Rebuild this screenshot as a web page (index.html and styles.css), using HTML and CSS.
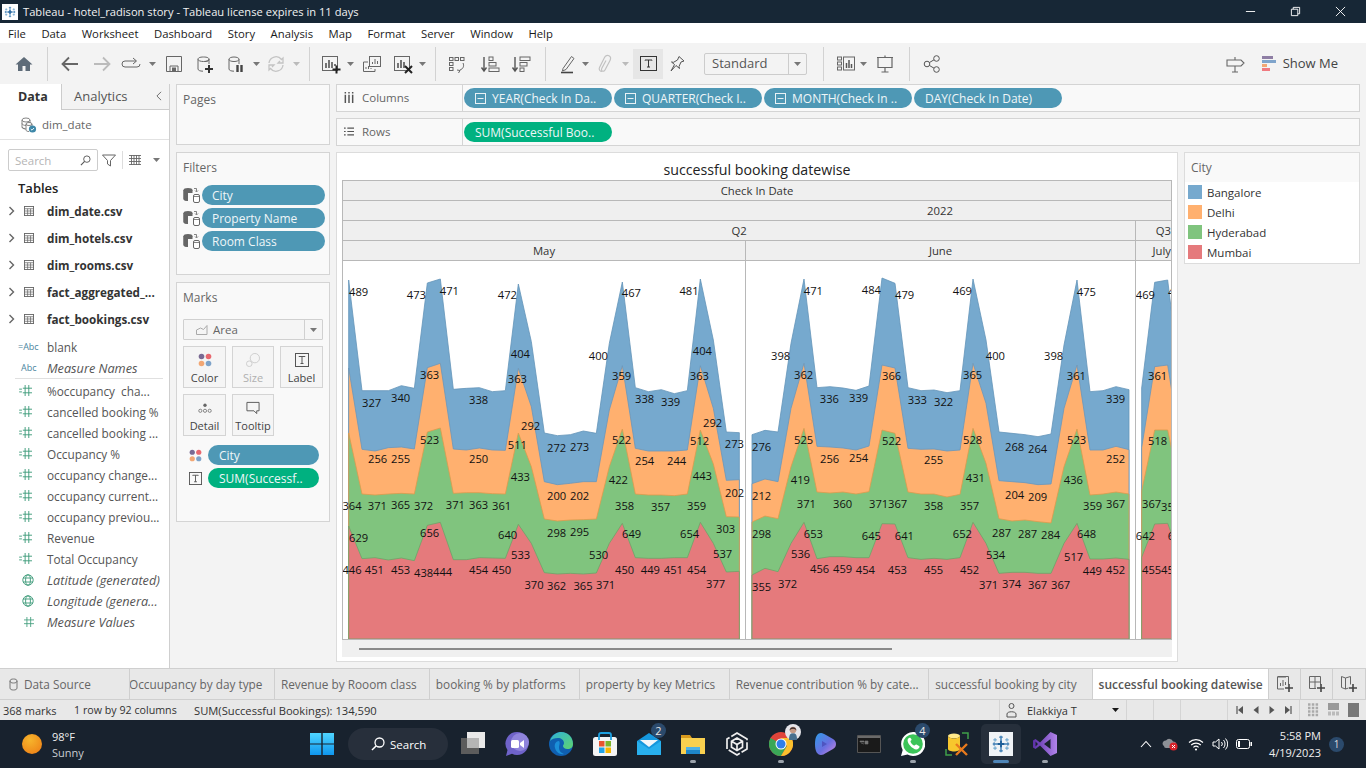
FILE: index.html
```html
<!DOCTYPE html>
<html lang="en">
<head>
<meta charset="utf-8">
<title>Tableau - hotel_radison story</title>
<link rel="stylesheet" href="styles.css">
</head>
<body>
<svg class="defs" width="0" height="0" aria-hidden="true">
  <defs>
    <symbol id="snow" viewBox="0 0 24 24">
      <g stroke="#3f7fb5" stroke-width="1.6" fill="none">
        <path d="M12 3v18M3 12h18"/>
        <path d="M10 4.500h4M10 19.500h4M4.500 10v4M19.500 10v4" stroke-width="1.200"/>
        <path d="M5.500 5.500v4M3.500 7.500h4M18.500 5.500v4M16.500 7.500h4M5.500 14.500v4M3.500 16.500h4M18.500 14.500v4M16.500 16.500h4" stroke-width="1" stroke="#5b9bc8"/>
        <path d="M12 8.500v7M8.500 12h7" stroke="#1f5f99" stroke-width="2"/>
      </g>
    </symbol>
    <symbol id="measure" viewBox="0 0 16 12">
      <path d="M0 4.500h3M0 7.500h3" stroke="#3c9a78" fill="none"/>
      <path d="M6.500 0v12M10.500 0v12M4 3.500h10M4 8.500h10" stroke="#3c9a78" fill="none"/>
    </symbol>
    <symbol id="globe" viewBox="0 0 12 12">
      <g fill="none" stroke="#3c9a78" stroke-width=".9"><circle cx="6" cy="6" r="5.200"/><ellipse cx="6" cy="6" rx="2.400" ry="5.200"/><path d="M1 4h10M1 8h10"/></g>
    </symbol>
    <symbol id="table" viewBox="0 0 11 11">
      <rect x=".5" y=".5" width="10" height="10" fill="none" stroke="#666"/>
      <path d="M.5 3h10M.5 5.500h10M.5 8h10M4 3v7.500M7.200 3v7.500" stroke="#666" stroke-width=".8"/>
    </symbol>
    <symbol id="chev" viewBox="0 0 7 10"><path d="M1.500 1l4 4-4 4" fill="none" stroke="#666" stroke-width="1.400"/></symbol>
    <symbol id="dbfilter" viewBox="0 0 18 16">
      <ellipse cx="5" cy="3" rx="4.500" ry="2" fill="#666"/><path d="M.5 3v9c0 1.100 2 2 4.500 2V3z" fill="#666"/><path d="M9.500 3v3H5v8C2.500 14 .5 13 .5 12V3" fill="#666"/>
      <path d="M11 1.500h2.500v3M12 3.500l1.500 1.500 1.500-1.500" fill="none" stroke="#666" stroke-width=".8"/>
      <rect x="10.500" y="7.500" width="6" height="8" rx="1.500" fill="#fff" stroke="#666"/><path d="M10.500 9.500h6" stroke="#666" stroke-width=".8"/>
    </symbol>
    <symbol id="caret" viewBox="0 0 7 4"><path d="M0 0h7L3.500 4z" fill="#777"/></symbol>
    <symbol id="caretg" viewBox="0 0 7 4"><path d="M0 0h7L3.500 4z" fill="#bbb"/></symbol>
    <symbol id="minus" viewBox="0 0 11 11"><rect x=".5" y=".5" width="10" height="10" fill="none" stroke="#e8f2f6"/><path d="M2.500 5.500h6" stroke="#e8f2f6"/></symbol>
    <symbol id="tbox" viewBox="0 0 14 14"><rect x=".5" y=".5" width="13" height="13" fill="none" stroke="#555"/><path d="M4 4V3.500h6V4M7 3.500v7M5.500 10.500h3" fill="none" stroke="#555"/></symbol>
    <symbol id="fourdots" viewBox="0 0 14 14"><circle cx="3.500" cy="3.500" r="2.800" fill="#7a6a93"/><circle cx="10.500" cy="3.500" r="2.800" fill="#e8686f"/><circle cx="3.500" cy="10.500" r="2.800" fill="#f2a774"/><circle cx="10.500" cy="10.500" r="2.800" fill="#7ea3c9"/></symbol>
  </defs>
</svg>

<header class="titlebar">
  <svg class="appicon" viewBox="0 0 16 16"><rect width="16" height="16" fill="#fff"/><use href="#snow" x="1" y="1" width="14" height="14"/></svg>
  <span class="apptitle">Tableau - hotel_radison story - Tableau license expires in 11 days</span>
  <div class="winctl">
    <svg viewBox="0 0 12 12"><path d="M1 6h10" stroke="#fff"/></svg>
    <svg viewBox="0 0 12 12"><path d="M1.500 3.500h7v7h-7zM3.500 3.500v-2h7v7h-2" fill="none" stroke="#fff"/></svg>
    <svg viewBox="0 0 12 12"><path d="M1 1l10 10M11 1L1 11" stroke="#fff"/></svg>
  </div>
</header>

<nav class="menubar">
  <span>File</span><span>Data</span><span>Worksheet</span><span>Dashboard</span><span>Story</span><span>Analysis</span><span>Map</span><span>Format</span><span>Server</span><span>Window</span><span>Help</span>
</nav>

<div class="toolbar">
  <svg class="ti" viewBox="0 0 20 20"><path d="M10 3L1.500 10.500H4V17h4.500v-5h3v5H16v-6.500h2.500z" fill="#5e6b78"/></svg>
  <i class="sep m13"></i>
  <svg class="ti m12" viewBox="0 0 20 20"><path d="M18 10H3M9 3.500L2.500 10 9 16.500" fill="none" stroke="#666" stroke-width="1.800"/></svg>
  <svg class="ti m12" viewBox="0 0 20 20"><path d="M2 10h15M11 3.500l6.500 6.500-6.500 6.500" fill="none" stroke="#bbb" stroke-width="1.800"/></svg>
  <svg class="ti m9" viewBox="0 0 20 20"><path d="M15 7H4a3 3 0 0 0 0 6h12a3 3 0 0 0 3-3" fill="none" stroke="#666"/><path d="M12 4l3.500 3-3.500 3" fill="none" stroke="#666"/></svg>
  <svg class="tc m8"><use href="#caret"/></svg>
  <svg class="ti m8" viewBox="0 0 20 20"><path d="M2.500 2.500h15v15h-15z" fill="none" stroke="#666"/><path d="M6 17.500V12h8v5.500" fill="none" stroke="#666"/><rect x="8" y="13.500" width="4" height="4" fill="#666"/></svg>
  <svg class="ti m11" viewBox="0 0 20 20"><path d="M10 7.500c2.500 0 4-.9 4-2.200S12.500 3 8.500 3 3 4 3 5.300V15c0 1.300 2 2.200 5 2.200M3 5.300c0 1.300 2.500 2.200 5.500 2.200s5.500-.9 5.500-2.200V10" fill="none" stroke="#666"/><path d="M14 11v8M10 15h8" stroke="#333" stroke-width="2"/></svg>
  <svg class="ti m11" viewBox="0 0 20 20"><path d="M3 5.300C3 4 5 3 8 3s5 1 5 2.300V10M3 5.300C3 6.600 5 7.500 8 7.500s5-.9 5-2.200M3 5.300V15c0 1.300 2 2.200 5 2.200" fill="none" stroke="#666"/><path d="M11.500 11v7M15.500 11v7" stroke="#444" stroke-width="2.400"/></svg>
  <svg class="tc m7"><use href="#caret"/></svg>
  <svg class="ti m6" viewBox="0 0 20 20"><path d="M3 9a7 7 0 0 1 12.500-3.500L17 4v5h-5l2-2M17 11a7 7 0 0 1-12.500 3.500L3 16v-5h5l-2 2" fill="none" stroke="#c4c4c4" stroke-width="1.300"/></svg>
  <svg class="tc m7"><use href="#caretg"/></svg>
  <i class="sep m9"></i>
  <svg class="ti m11" viewBox="0 0 20 20"><rect x="1.500" y="2.500" width="15" height="14" fill="none" stroke="#666"/><path d="M5 14V9M8 14V6M11 14v-6M14 12v-2" stroke="#555" stroke-width="1.600"/><path d="M15.500 11.500v8M11.500 15.500h8" stroke="#222" stroke-width="2"/></svg>
  <svg class="tc m6"><use href="#caret"/></svg>
  <svg class="ti m8" viewBox="0 0 20 20"><rect x="7.500" y="2.500" width="11" height="10" fill="#f3f3f3" stroke="#666"/><path d="M10.500 10V8M13 10V5M15.500 10V7" stroke="#666"/><path d="M6 8H1.500v9.500H13V15" fill="none" stroke="#666"/><path d="M4 15v-2M6.500 15v-3M9 15v-1" stroke="#666"/></svg>
  <svg class="ti m11" viewBox="0 0 20 20"><rect x="1.500" y="2.500" width="15" height="14" fill="none" stroke="#666"/><path d="M5 14V9M8 14V6M11 14v-6" stroke="#555" stroke-width="1.600"/><path d="M12 12l7 7M19 12l-7 7" stroke="#222" stroke-width="2"/></svg>
  <svg class="tc m6"><use href="#caret"/></svg>
  <i class="sep m9"></i>
  <svg class="ti m11" viewBox="0 0 20 20"><g fill="none" stroke="#666"><rect x="2.500" y="3.500" width="3.500" height="3"/><rect x="8" y="3.500" width="3.500" height="3"/><rect x="13.500" y="3.500" width="3.500" height="3"/><rect x="2.500" y="8.500" width="3.500" height="3"/><rect x="2.500" y="13.500" width="3.500" height="3"/><path d="M16 9c1.500 3 0 6-3 7M10 16l3 .5-1.500 2.500"/></g></svg>
  <svg class="ti m13" viewBox="0 0 20 20"><path d="M4 3v13M1.500 13.500L4 17l2.500-3.500" fill="none" stroke="#555" stroke-width="1.400"/><g fill="none" stroke="#666"><rect x="9" y="3" width="4" height="3.500"/><rect x="9" y="8.500" width="7" height="3.500"/><rect x="9" y="14" width="10" height="3.500"/></g></svg>
  <svg class="ti m11" viewBox="0 0 20 20"><path d="M4 3v13M1.500 13.500L4 17l2.500-3.500" fill="none" stroke="#555" stroke-width="1.400"/><g fill="none" stroke="#666"><rect x="9" y="3" width="10" height="3.500"/><rect x="9" y="8.500" width="7" height="3.500"/><rect x="9" y="14" width="4" height="3.500"/></g></svg>
  <i class="sep m14"></i>
  <svg class="ti m12" viewBox="0 0 20 20"><path d="M5 14.500L13.500 2.500l2.500 2L8 15.500 4.500 17z" fill="none" stroke="#666"/><path d="M3 18.500h12" stroke="#444" stroke-width="1.600"/></svg>
  <svg class="tc m4"><use href="#caret"/></svg>
  <svg class="ti m6" viewBox="0 0 20 20"><path d="M7 17.500c-2 0-3.500-2-2.500-4l5-10c1-2 3-2.500 4.500-1.700s2 2.700 1 4.700l-5 9.500c-.7 1.300-2 1.500-2.800 1s-1-1.600-.4-2.800L11 6.500" fill="none" stroke="#c2c2c2" stroke-width="1.200"/></svg>
  <svg class="tc m7"><use href="#caretg"/></svg>
  <div class="tbtn m4"><svg viewBox="0 0 17 15"><rect x=".5" y=".5" width="16" height="14" fill="none" stroke="#333"/><path d="M5 4.500V4h7v.5M8.500 4v7M7 11h3" fill="none" stroke="#333"/></svg></div>
  <svg class="ti m4" viewBox="0 0 20 20"><path d="M12 2.500l5 4.500-3 1-2 4.500 .5 2L9 11.500 4 17l3.500-6.500L4.500 8l2 .3L10.500 6z" fill="none" stroke="#555"/></svg>
  <div class="combo m17"><span>Standard</span><b><svg class="tc"><use href="#caret"/></svg></b></div>
  <i class="sep m16"></i>
  <svg class="ti m12" viewBox="0 0 20 20"><g fill="none" stroke="#666"><rect x="1.500" y="3" width="4" height="3"/><rect x="1.500" y="8" width="4" height="3"/><rect x="1.500" y="13" width="4" height="3"/><rect x="7.500" y="3" width="11" height="13"/></g><path d="M10.500 14V9M13 14V6M15.500 14v-4" stroke="#555" stroke-width="1.500"/></svg>
  <svg class="tc m4"><use href="#caret"/></svg>
  <svg class="ti m8" viewBox="0 0 20 20"><path d="M2 3.500h16M3 3.500v10h14v-10M10 1.500v2M10 13.500v4M6.500 18h7" fill="none" stroke="#666" stroke-width="1.200"/></svg>
  <i class="sep m14"></i>
  <svg class="ti m12" viewBox="0 0 20 20"><g fill="none" stroke="#555"><circle cx="5" cy="10" r="2.800"/><circle cx="14.500" cy="4.500" r="2.800"/><circle cx="14.500" cy="15.500" r="2.800"/><path d="M7.500 8.500l4.500-2.700M7.500 11.500l4.500 2.700"/></g></svg>
  <span class="spacer"></span>
  <svg class="ti" viewBox="0 0 20 20"><path d="M2 6h14l3 3-3 3H2zM10 3v3M10 12v6M7 18h6" fill="none" stroke="#666" stroke-width="1.100"/></svg>
  <div class="showme">
    <span class="smbars"><i class="s1"></i><i class="s2"></i><i class="s3"></i><i class="s4"></i></span>
    <span>Show Me</span>
  </div>
</div>

<main class="main">
  <aside class="datapane">
    <div class="dtabs"><span class="dtab on">Data</span><span class="dtab off">Analytics<svg viewBox="0 0 7 12"><path d="M6 1L1 6l5 5" fill="none" stroke="#555"/></svg></span></div>
    <div class="source">
      <svg viewBox="0 0 17 16"><g fill="none" stroke="#777" stroke-width=".9"><ellipse cx="6" cy="3" rx="4" ry="2"/><path d="M2 3v7c0 1 1.500 2 4 2M10 3v3M2 6.500c0 1 2 2 4 2M2 10c0 1 2 1.500 3 1.500"/><ellipse cx="9" cy="7" rx="3" ry="1.500"/><path d="M6 7v6c0 1 1.500 1.500 3 1.500M12 7v2"/></g><circle cx="12.500" cy="12" r="3.600" fill="#3d87a8"/><path d="M10.800 12l1.200 1.200 2-2.200" fill="none" stroke="#fff" stroke-width=".9"/></svg>
      <span>dim_date</span>
    </div>
    <div class="searchrow">
      <div class="search"><span>Search</span><svg viewBox="0 0 12 12"><circle cx="7.500" cy="4.500" r="3.500" fill="none" stroke="#555"/><path d="M5 7l-4 4" stroke="#555" stroke-width="1.200"/></svg></div>
      <svg class="funnel" viewBox="0 0 14 13"><path d="M.5 1h13L8.500 6.500V12l-3-2V6.500z" fill="none" stroke="#666"/></svg>
      <i class="vsep"></i>
      <svg class="listicon" viewBox="0 0 12 10"><path d="M0 .5h12M0 3.500h12M0 6.500h12M0 9.500h12M2.500 0v10M5 0v10M7.500 0v10M10 0v10" stroke="#666" stroke-width=".9"/></svg>
      <svg class="tc"><use href="#caret"/></svg>
    </div>
    <div class="tablesh">Tables</div>
    <ul class="tables">
      <li><svg class="ch"><use href="#chev"/></svg><svg class="tb"><use href="#table"/></svg><span>dim_date.csv</span></li>
      <li><svg class="ch"><use href="#chev"/></svg><svg class="tb"><use href="#table"/></svg><span>dim_hotels.csv</span></li>
      <li><svg class="ch"><use href="#chev"/></svg><svg class="tb"><use href="#table"/></svg><span>dim_rooms.csv</span></li>
      <li><svg class="ch"><use href="#chev"/></svg><svg class="tb"><use href="#table"/></svg><span>fact_aggregated_...</span></li>
      <li><svg class="ch"><use href="#chev"/></svg><svg class="tb"><use href="#table"/></svg><span>fact_bookings.csv</span></li>
    </ul>
    <ul class="fields">
      <li><em class="abc eq">=Abc</em><span>blank</span></li>
      <li class="last"><em class="abc">Abc</em><span class="it">Measure Names</span></li>
      <li><svg class="mi"><use href="#measure"/></svg><span>%occupancy &nbsp;cha...</span></li>
      <li><svg class="mi"><use href="#measure"/></svg><span>cancelled booking %</span></li>
      <li><svg class="mi"><use href="#measure"/></svg><span>cancelled booking ...</span></li>
      <li><svg class="mi"><use href="#measure"/></svg><span>Occupancy %</span></li>
      <li><svg class="mi"><use href="#measure"/></svg><span>occupancy change...</span></li>
      <li><svg class="mi"><use href="#measure"/></svg><span>occupancy current...</span></li>
      <li><svg class="mi"><use href="#measure"/></svg><span>occupancy previou...</span></li>
      <li><svg class="mi"><use href="#measure"/></svg><span>Revenue</span></li>
      <li><svg class="mi"><use href="#measure"/></svg><span>Total Occupancy</span></li>
      <li><svg class="gi"><use href="#globe"/></svg><span class="it">Latitude (generated)</span></li>
      <li><svg class="gi"><use href="#globe"/></svg><span class="it">Longitude (genera...</span></li>
      <li><svg class="hi" viewBox="0 0 12 12"><path d="M3.500 0v12M8 0v12M0 3.500h12M0 8h12" stroke="#3c9a78" fill="none"/></svg><span class="it">Measure Values</span></li>
    </ul>
  </aside>

  <section class="cards">
    <div class="card pages"><h3>Pages</h3></div>
    <div class="card filters">
      <h3>Filters</h3>
      <div class="frow"><svg><use href="#dbfilter"/></svg><span class="pill blue">City</span></div>
      <div class="frow"><svg><use href="#dbfilter"/></svg><span class="pill blue">Property Name</span></div>
      <div class="frow"><svg><use href="#dbfilter"/></svg><span class="pill blue">Room Class</span></div>
    </div>
    <div class="card marks">
      <h3>Marks</h3>
      <div class="markcombo">
        <svg viewBox="0 0 12 10"><path d="M.5 9.500V5l4-2 3 1.500L11 .5v9z" fill="none" stroke="#aaa"/></svg>
        <span>Area</span><b><svg class="tc"><use href="#caret"/></svg></b>
      </div>
      <div class="markbtns">
        <div class="mb"><svg class="mbi"><use href="#fourdots"/></svg><span>Color</span></div>
        <div class="mb dim"><svg class="mbi" viewBox="0 0 15 15"><circle cx="9.500" cy="5.500" r="5" fill="none" stroke="#ccc"/><circle cx="3.500" cy="11.500" r="3" fill="none" stroke="#ccc"/></svg><span>Size</span></div>
        <div class="mb"><svg class="mbi"><use href="#tbox"/></svg><span>Label</span></div>
        <div class="mb"><svg class="mbi" viewBox="0 0 15 14"><circle cx="7.500" cy="4" r="1.800" fill="#666"/><g fill="none" stroke="#666" stroke-width=".8"><circle cx="2.500" cy="10" r="1.700"/><circle cx="7.500" cy="10" r="1.700"/><circle cx="12.500" cy="10" r="1.700"/></g></svg><span>Detail</span></div>
        <div class="mb"><svg class="mbi" viewBox="0 0 15 14"><path d="M1 1h13v9h-2.500v3l-3-3H1z" fill="none" stroke="#555"/></svg><span>Tooltip</span></div>
      </div>
      <div class="mrow"><svg><use href="#fourdots"/></svg><span class="pill blue">City</span></div>
      <div class="mrow"><svg><use href="#tbox"/></svg><span class="pill green">SUM(Successf..</span></div>
    </div>
  </section>

  <section class="work">
    <div class="shelf">
      <div class="shlabel"><svg viewBox="0 0 10 12"><path d="M1 3v9M5 3v9M9 3v9M1 0v1.500M5 0v1.500M9 0v1.500" stroke="#555" stroke-width="1.600"/></svg>Columns</div>
      <div class="shpills">
        <span class="pill blue cp"><svg><use href="#minus"/></svg>YEAR(Check In Da..</span>
        <span class="pill blue cp"><svg><use href="#minus"/></svg>QUARTER(Check I..</span>
        <span class="pill blue cp"><svg><use href="#minus"/></svg>MONTH(Check In ..</span>
        <span class="pill blue cp">DAY(Check In Date)</span>
      </div>
    </div>
    <div class="shelf">
      <div class="shlabel"><svg viewBox="0 0 12 10"><path d="M0 1h2M4 1h8M0 5h2M4 5h8M0 9h2M4 9h8" stroke="#555" stroke-width="1.400"/></svg>Rows</div>
      <div class="shpills"><span class="pill green cp">SUM(Successful Boo..</span></div>
    </div>
    <div class="vizrow">
      <div class="viz">
        <div class="viztitle">successful booking datewise</div>
        <div class="xtab">
          <div class="hrow"><div class="hc">Check In Date</div></div>
          <div class="hrow"><div class="hc yr">2022</div></div>
          <div class="hrow"><div class="hc q2">Q2</div><div class="hc q3">Q3</div></div>
          <div class="hrow"><div class="hc mmay">May</div><div class="hc mjun">June</div><div class="hc mjul">July</div></div>
          <div class="panes">
            <svg class="pane pmay" viewBox="21 3 1206 1134">
              <g class="areas">
                <polygon class="a-b" points="38,1137 38,60 78,392 117,392 157,392 196,377 235,385 274,69 313,57 352,388 391,385 430,383 469,395 508,392 547,72 586,245 625,519 664,527 703,524 742,513 781,520 820,250 859,66 898,383 937,395 976,389 1015,401 1054,392 1093,57 1132,240 1171,516 1210,518 1210,1137"/>
                <polygon class="a-o" points="38,1137 38,324 78,568 117,573 157,563 196,561 235,567 274,323 313,310 352,567 391,570 430,564 469,570 508,571 547,325 586,440 625,665 664,674 703,670 742,665 781,665 820,450 859,317 898,565 937,573 976,573 1015,573 1054,570 1093,317 1132,445 1171,661 1210,659 1210,1137"/>
                <polygon class="a-g" points="38,1137 38,519 78,702 117,705 157,702 196,700 235,702 274,516 313,504 352,700 391,698 430,698 469,701 508,702 547,519 586,620 625,777 664,783 703,780 742,779 781,777 820,620 859,507 898,702 937,705 976,705 1015,707 1054,702 1093,510 1132,612 1171,770 1210,771 1210,1137"/>
                <polygon class="a-r" points="38,1137 38,798 78,896 117,893 157,900 196,894 235,902 274,796 313,787 352,899 391,899 430,893 469,894 508,895 547,793 586,850 625,938 664,942 703,940 742,942 781,939 820,850 859,790 898,893 937,895 976,895 1015,893 1054,893 1093,787 1132,850 1171,936 1210,934 1210,1137"/>
              </g>
              <g class="lbl">
                <text x="68" y="107">489</text><text x="241" y="116">473</text><text x="340" y="104">471</text><text x="514" y="118">472</text><text x="553" y="293">404</text><text x="787" y="299">400</text><text x="886" y="112">467</text><text x="1059" y="104">481</text><text x="1099" y="284">404</text>
                <text x="107" y="440">327</text><text x="194" y="425">340</text><text x="281" y="356">363</text><text x="428" y="431">338</text><text x="544" y="370">363</text><text x="857" y="361">359</text><text x="926" y="430">338</text><text x="1004" y="437">339</text><text x="1090" y="361">363</text>
                <text x="584" y="509">292</text><text x="1130" y="500">292</text><text x="662" y="575">272</text><text x="731" y="572">273</text><text x="1195" y="563">273</text>
                <text x="125" y="610">256</text><text x="194" y="608">255</text><text x="281" y="551">523</text><text x="428" y="610">250</text><text x="544" y="566">511</text><text x="857" y="553">522</text><text x="926" y="614">254</text><text x="1022" y="616">244</text><text x="1091" y="556">512</text>
                <text x="553" y="664">433</text><text x="847" y="673">422</text><text x="1099" y="659">443</text><text x="662" y="721">200</text><text x="731" y="719">202</text><text x="1196" y="710">202</text>
                <text x="48" y="749">364</text><text x="124" y="749">371</text><text x="194" y="746">365</text><text x="263" y="749">372</text><text x="358" y="746">371</text><text x="428" y="746">363</text><text x="497" y="749">361</text><text x="866" y="749">358</text><text x="974" y="752">357</text><text x="1082" y="749">359</text>
                <text x="662" y="830">298</text><text x="731" y="827">295</text><text x="1169" y="818">303</text><text x="68" y="845">629</text><text x="281" y="832">656</text><text x="515" y="838">640</text><text x="887" y="835">649</text><text x="1061" y="833">654</text>
                <text x="554" y="898">533</text><text x="788" y="898">530</text><text x="1160" y="895">537</text>
                <text x="48" y="943">446</text><text x="115" y="941">451</text><text x="194" y="941">453</text><text x="263" y="950">438</text><text x="320" y="947">444</text><text x="428" y="941">454</text><text x="497" y="941">450</text><text x="866" y="941">450</text><text x="943" y="943">449</text><text x="1012" y="941">451</text><text x="1082" y="941">454</text>
                <text x="594" y="986">370</text><text x="662" y="989">362</text><text x="741" y="989">365</text><text x="809" y="986">371</text><text x="1139" y="983">377</text>
              </g>
            </svg>
            <svg class="pane pjun" viewBox="3 3 1167 1134">
              <g class="areas">
                <polygon class="a-b" points="21,1137 21,524 60,511 99,516 138,250 177,57 216,383 255,380 294,384 333,391 372,378 411,54 450,70 489,383 528,392 567,390 606,398 645,392 684,57 723,240 762,516 801,520 840,524 879,530 918,522 957,255 996,60 1035,395 1074,392 1113,380 1152,389 1152,1137"/>
                <polygon class="a-o" points="21,1137 21,671 60,657 99,665 138,445 177,310 216,559 255,561 294,564 333,570 372,558 411,315 450,324 489,565 528,568 567,567 606,573 645,570 684,310 723,430 762,662 801,665 840,668 879,674 918,672 957,445 996,315 1035,570 1074,570 1113,559 1152,569 1152,1137"/>
                <polygon class="a-g" points="21,1137 21,786 60,768 99,776 138,620 177,505 216,696 255,699 294,696 333,702 372,695 411,510 450,520 489,696 528,702 567,702 606,711 645,703 684,505 723,610 762,776 801,783 840,780 879,785 918,789 957,620 996,507 1035,705 1074,702 1113,696 1152,702 1152,1137"/>
                <polygon class="a-r" points="21,1137 21,945 60,925 99,935 138,850 177,787 216,896 255,890 294,890 333,893 372,893 411,791 450,792 489,893 528,898 567,895 606,898 645,893 684,787 723,850 762,940 801,937 840,937 879,940 918,940 957,850 996,790 1035,897 1074,897 1113,894 1152,898 1152,1137"/>
              </g>
              <g class="lbl">
                <text x="205" y="104">471</text><text x="379" y="101">484</text><text x="479" y="116">479</text><text x="652" y="104">469</text><text x="1024" y="107">475</text><text x="107" y="299">398</text><text x="751" y="299">400</text><text x="926" y="299">398</text>
                <text x="176" y="356">362</text><text x="440" y="361">366</text><text x="683" y="356">365</text><text x="994" y="361">361</text><text x="253" y="428">336</text><text x="341" y="425">339</text><text x="517" y="431">333</text><text x="596" y="437">322</text><text x="1112" y="428">339</text>
                <text x="50" y="572">276</text><text x="809" y="572">268</text><text x="878" y="578">264</text><text x="176" y="551">525</text><text x="440" y="556">522</text><text x="683" y="551">528</text><text x="995" y="553">523</text>
                <text x="254" y="608">256</text><text x="341" y="605">254</text><text x="566" y="611">255</text><text x="1112" y="608">252</text><text x="166" y="671">419</text><text x="691" y="665">431</text><text x="985" y="671">436</text>
                <text x="50" y="719">212</text><text x="809" y="716">204</text><text x="878" y="722">209</text><text x="184" y="743">371</text><text x="293" y="743">360</text><text x="401" y="743">371</text><text x="458" y="743">367</text><text x="566" y="749">358</text><text x="674" y="749">357</text><text x="1043" y="749">359</text><text x="1112" y="743">367</text>
                <text x="50" y="833">298</text><text x="205" y="833">653</text><text x="379" y="839">645</text><text x="478" y="839">641</text><text x="652" y="833">652</text><text x="770" y="830">287</text><text x="848" y="833">287</text><text x="917" y="836">284</text><text x="1025" y="835">648</text>
                <text x="167" y="895">536</text><text x="752" y="896">534</text><text x="986" y="904">517</text>
                <text x="224" y="938">456</text><text x="293" y="938">459</text><text x="361" y="941">454</text><text x="457" y="941">453</text><text x="566" y="941">455</text><text x="674" y="941">452</text><text x="1042" y="944">449</text><text x="1112" y="941">452</text>
                <text x="50" y="992">355</text><text x="128" y="983">372</text><text x="731" y="986">371</text><text x="800" y="983">374</text><text x="878" y="986">367</text><text x="947" y="986">367</text>
              </g>
            </svg>
            <svg class="pane pjul" viewBox="1173 3 105 1134">
              <g class="areas">
                <polygon class="a-b" points="1190,1137 1190,384 1229,67 1268,60 1307,380 1307,1137"/>
                <polygon class="a-o" points="1190,1137 1190,563 1229,320 1268,315 1307,560 1307,1137"/>
                <polygon class="a-g" points="1190,1137 1190,693 1229,510 1268,510 1307,700 1307,1137"/>
                <polygon class="a-r" points="1190,1137 1190,892 1229,792 1268,790 1307,895 1307,1137"/>
              </g>
              <g class="lbl">
                <text x="1201" y="116">469</text><text x="1298" y="107">471</text><text x="1238" y="361">361</text><text x="1238" y="556">518</text><text x="1220" y="743">367</text><text x="1277" y="752">358</text><text x="1201" y="839">642</text><text x="1297" y="839">645</text><text x="1220" y="941">455</text><text x="1277" y="941">454</text>
              </g>
            </svg>
          </div>
        </div>
        <div class="hscroll"><span></span></div>
      </div>
      <div class="legend">
        <div class="lgtitle">City</div>
        <div class="lgitem"><i class="sw-b"></i>Bangalore</div>
        <div class="lgitem"><i class="sw-o"></i>Delhi</div>
        <div class="lgitem"><i class="sw-g"></i>Hyderabad</div>
        <div class="lgitem"><i class="sw-r"></i>Mumbai</div>
      </div>
    </div>
  </section>
</main>

<div class="tabs">
  <div class="tab t0"><svg viewBox="0 0 9 13"><path d="M1 3v7c0 1.500 1.500 2 3.500 2S8 11.500 8 10V3C8 1.500 6.500 1 4.500 1S1 1.500 1 3zM1 3c0 1.500 1.500 2 3.500 2S8 4.500 8 3" fill="none" stroke="#777"/></svg>Data Source</div>
  <div class="tab t1"><span>Occuupancy by day type</span></div>
  <div class="tab t2">Revenue by Rooom class</div>
  <div class="tab t3">booking % by platforms</div>
  <div class="tab t4">property by key Metrics</div>
  <div class="tab t5">Revenue contribution % by cate...</div>
  <div class="tab t6">successful booking by city</div>
  <div class="tab t7 active">successful booking datewise</div>
  <div class="tab tn"><svg viewBox="0 0 18 18"><path d="M10 2H1.500v12H8M1.500 1.500h11v8" fill="none" stroke="#666"/><path d="M4.500 11V8M7 11V5M9.500 10V7" stroke="#666"/><path d="M13 9v8M9 13h8" stroke="#444" stroke-width="1.600"/></svg></div>
  <div class="tab tn"><svg viewBox="0 0 18 18"><path d="M1.500 1.500h11v8M1.500 1.500v12H8M1.500 7h11M7 1.500v12" fill="none" stroke="#666"/><path d="M13 9v8M9 13h8" stroke="#444" stroke-width="1.600"/></svg></div>
  <div class="tab tn"><svg viewBox="0 0 18 18"><path d="M1.500 1.500l4 1.500 5-1.500v8M1.500 1.500v11l4 1.500 3-1M5.500 3v11" fill="none" stroke="#666"/><path d="M13 9v8M9 13h8" stroke="#444" stroke-width="1.600"/></svg></div>
</div>

<footer class="status">
  <span class="st1">368 marks</span><span class="st2">1 row by 92 columns</span><span class="st3">SUM(Successful Bookings): 134,590</span>
  <span class="spacer"></span>
  <div class="user"><svg viewBox="0 0 11 16"><circle cx="5.500" cy="4" r="2.500" fill="none" stroke="#555"/><path d="M1 15v-3c0-3 9-3 9 0v3z" fill="none" stroke="#555"/></svg><span>Elakkiya T</span><svg class="tc dark"><use href="#caret"/></svg></div>
  <i class="cellb"></i><i class="cellb"></i><i class="cellb wide"></i>
  <div class="nav">
    <svg viewBox="0 0 8 8"><path d="M1 0v8" stroke="#555" stroke-width="1.200"/><path d="M7 0v8L2 4z" fill="#555"/></svg>
    <svg viewBox="0 0 8 8"><path d="M6.500 0v8L1.500 4z" fill="#555"/></svg>
    <svg viewBox="0 0 8 8"><path d="M1.500 0v8l5-4z" fill="#555"/></svg>
    <svg viewBox="0 0 8 8"><path d="M7 0v8" stroke="#555" stroke-width="1.200"/><path d="M1 0v8l5-4z" fill="#555"/></svg>
  </div>
  <div class="views">
    <svg viewBox="0 0 11 14"><path d="M0 1.500h11M0 5h11M0 8.500h11M0 12h11" stroke="#aaa" stroke-width="2.500" stroke-dasharray="2.500 1.300"/></svg>
    <svg viewBox="0 0 11 14"><rect width="11" height="7" fill="#999"/><path d="M0 10.500h11" stroke="#bbb" stroke-width="4" stroke-dasharray="3 1"/></svg>
    <svg viewBox="0 0 11 14"><rect width="11" height="14" fill="#777"/></svg>
  </div>
</footer>

<div class="taskbar">
  <div class="weather">
    <i class="sun"></i>
    <div class="wtext"><span>98°F</span><span class="sub">Sunny</span></div>
  </div>
  <div class="taskcenter">
    <div class="tk"><svg viewBox="0 0 24 22"><defs><linearGradient id="wg" x1="0" y1="0" x2="0" y2="1"><stop offset="0" stop-color="#4fd5ff"/><stop offset="1" stop-color="#0f96ee"/></linearGradient></defs><path d="M0 0h11.300v10.500H0zM12.700 0H24v10.500H12.700zM0 11.500h11.300V22H0zM12.700 11.500H24V22H12.700z" fill="url(#wg)"/></svg></div>
    <div class="tsearch"><svg viewBox="0 0 14 14"><circle cx="8.500" cy="5.500" r="4.500" fill="none" stroke="#fff" stroke-width="1.300"/><path d="M5.300 8.700L1 13" stroke="#fff" stroke-width="1.500"/></svg>Search</div>
    <div class="tk"><svg viewBox="0 0 24 24"><rect x="6" y="0" width="18" height="16" fill="#e9e9e9"/><rect y="6" width="18" height="16" fill="#5c5c5c"/><rect x="6" y="6" width="12" height="10" fill="#b5b5b5"/></svg></div>
    <div class="tk"><svg viewBox="0 0 24 24"><path d="M12 0a11.500 11.500 0 1 1-5 21.800L1 24l1.500-6A11.500 11.500 0 0 1 12 0z" fill="#6f63c9"/><circle cx="15" cy="10" r="9" fill="#8f84dc"/><rect x="6" y="8" width="8" height="8" rx="1.500" fill="#fff"/><path d="M15 11l4-3v8l-4-3z" fill="#fff"/></svg></div>
    <div class="tk"><svg viewBox="0 0 24 24"><defs><linearGradient id="eg" x1="0" y1="0" x2="1" y2="1"><stop offset="0" stop-color="#2fb2d8"/><stop offset="1" stop-color="#5fd36f"/></linearGradient></defs><circle cx="12" cy="12" r="12" fill="#0f5fb0"/><path d="M1 9C3 2 9 0 12 0c7 0 12 5 12 12 0 3-2 5-5.500 5-3 0-4.500-1.500-4.500-3 0-1 1-1.500 1-3 0-3-3-5-6-5-3.500 0-6.500 1-8 3z" fill="url(#eg)"/><path d="M10 9c-3 0-5 3-4 7s5 7 9 6c-3-1-5-3-5-6 0-3 1.500-5 0-7z" fill="#1b8fd8"/></svg></div>
    <div class="tk"><svg viewBox="0 0 24 24"><rect y="5" width="24" height="19" rx="2.500" fill="#f4f4f4"/><path d="M6 8V3c0-2 1-2 2-2h8c1 0 2 0 2 2v5" fill="none" stroke="#1da0e0" stroke-width="1.800"/><rect x="6" y="9" width="5.500" height="5.500" fill="#e8542f"/><rect x="12.500" y="9" width="5.500" height="5.500" fill="#7db52c"/><rect x="6" y="15.500" width="5.500" height="5.500" fill="#20a3e8"/><rect x="12.500" y="15.500" width="5.500" height="5.500" fill="#f7b500"/></svg></div>
    <div class="tk"><svg viewBox="0 0 24 24"><path d="M0 9L12 1l12 8v14H0z" fill="#1597dd"/><path d="M3 8h18l-9 7z" fill="#f1f6fa"/><path d="M0 9l12 8 12-8v14H0z" fill="#28b0ee"/></svg><b class="badge">2</b></div>
    <div class="tk"><svg viewBox="0 0 24 24"><path d="M0 3h9l2 3h13v16H0z" fill="#d89a1d"/><rect y="6" width="24" height="16" fill="#f9d04f"/><path d="M5 15h14v7H5z" fill="#1e86c9"/><rect x="5" y="15" width="14" height="3" fill="#4fb2e6"/></svg><i class="dot"></i></div>
    <div class="tk"><svg viewBox="0 0 24 24"><g fill="none" stroke="#eee" stroke-width="1.700"><path d="M12 1l10 6v10l-10 6L2 17V7z" stroke-dasharray="13 2"/><path d="M12 6l5.500 3.200v6L12 18.500l-5.500-3.300v-6zM6.500 9.200L12 12.500l5.500-3.300M12 12.500v6"/></g></svg></div>
    <div class="tk"><svg viewBox="0 0 24 24"><circle cx="12" cy="12" r="12" fill="#e0443a"/><path d="M12 12L1.600 6A12 12 0 0 0 12 24l6-10z" fill="#3aa757"/><path d="M12 24a12 12 0 0 0 10.400-18H12l6 8z" fill="#fbc02d"/><circle cx="12" cy="12" r="5.500" fill="#fff"/><circle cx="12" cy="12" r="4.500" fill="#2f7fe8"/></svg><b class="avatar"><svg viewBox="0 0 12 12"><circle cx="6" cy="6" r="6" fill="#e5e5ea"/><path d="M3 12c0-4 1-5 3-5s3 1 3 5z" fill="#48708f"/><circle cx="6" cy="4.500" r="2.400" fill="#c59a85"/><path d="M3.500 5C3 1.500 9 1.500 8.500 5 8 3 4 3 3.500 5z" fill="#3b2c2c"/></svg></b><i class="dot"></i></div>
    <div class="tk"><svg viewBox="0 0 24 24"><defs><linearGradient id="cg" x1="0" y1="0" x2="1" y2="1"><stop offset="0" stop-color="#2f9be8"/><stop offset=".55" stop-color="#6a6fe0"/><stop offset="1" stop-color="#d08ae0"/></linearGradient></defs><path d="M8 1C4 1 2 5 2 12s2 11 6 11c2 0 3-1 5-2l7-4c2-1 3-3 3-5s-1-4-3-5l-7-4C11 2 10 1 8 1z" fill="url(#cg)"/><path d="M9 9l5 3-5 3z" fill="#4f55c0"/></svg></div>
    <div class="tk"><svg viewBox="0 0 24 18"><rect width="24" height="18" rx="1" fill="#555"/><rect x="1" y="1" width="22" height="16" fill="#1a1a1a"/><rect x="1" y="1" width="22" height="2" fill="#6a6a6a"/><path d="M3 6h4v1H3zM8 6h3v3H8zM4 8l3 1" stroke="#777" stroke-width=".6" fill="#777"/></svg></div>
    <div class="tk"><svg viewBox="0 0 24 24"><path d="M12 0a12 12 0 1 1-5.500 22.500L0 24l1.700-6A12 12 0 0 1 12 0z" fill="#fff"/><circle cx="12" cy="12" r="9.800" fill="#3bc458"/><path d="M8 6c-2 1-2 4 1 7.500s6.500 5 8.500 3c1-1 1.500-2 .5-2.500l-2.500-1.500c-1-.5-1.500 1-2.500 1s-3.500-3-3.500-4c0-1 1.300-1 1-2.200L9.500 6C9.300 5.500 8.500 5.700 8 6z" fill="#fff"/></svg><b class="badge">4</b><i class="dot"></i></div>
    <div class="tk"><svg viewBox="0 0 24 24"><path d="M1 17v6h6M17 1h6v6" fill="none" stroke="#3fa04a" stroke-width="1.500"/><ellipse cx="9" cy="4" rx="6" ry="2.600" fill="#ffe98a"/><path d="M3 4v13c0 1.500 3 2.500 6 2.500s6-1 6-2.500V4c0 1.500-3 2.500-6 2.500S3 5.500 3 4z" fill="#f7c72d"/><path d="M11 12l11 11M22 12L11 23" stroke="#e87a1d" stroke-width="2.400"/></svg></div>
    <div class="tk cur"><svg viewBox="0 0 24 24"><rect width="24" height="24" fill="#f0f3f6"/><use href="#snow" x="1" y="1" width="22" height="22"/></svg><i class="cbar"></i></div>
    <div class="tk"><svg viewBox="0 0 24 24"><defs><linearGradient id="vg" x1="0" y1="0" x2="1" y2="0"><stop offset="0" stop-color="#5b2fa8"/><stop offset="1" stop-color="#b184ea"/></linearGradient></defs><path d="M17.500 0L24 3v18l-6.500 3L7 13.500 2.500 17 0 15.500v-7L2.500 7 7 10.500zM17.500 7L11 12l6.500 5zM2.500 9.500v5L5 12z" fill="url(#vg)"/></svg><i class="dot"></i></div>
  </div>
  <span class="spacer"></span>
  <div class="tray">
    <svg class="t-up" viewBox="0 0 12 8"><path d="M1 7l5-5.500L11 7" fill="none" stroke="#fff" stroke-width="1.100"/></svg>
    <svg class="t-cloud" viewBox="0 0 16 14"><path d="M2 9a3 3 0 0 1 2-5.500 4 4 0 0 1 7 1A3 3 0 0 1 11 11H4A2 2 0 0 1 2 9z" fill="#8c9096"/><circle cx="11.500" cy="9.500" r="4" fill="#d8232a"/><path d="M10 8l3 3M13 8l-3 3" stroke="#fff"/></svg>
    <svg class="t-wifi" viewBox="0 0 16 13"><g fill="none" stroke="#fff" stroke-width="1.100"><path d="M1 4.500a10 10 0 0 1 14 0M3.200 7a7 7 0 0 1 9.600 0M5.400 9.300a4 4 0 0 1 5.200 0"/></g><circle cx="8" cy="11.500" r="1.100" fill="#fff"/></svg>
    <svg class="t-vol" viewBox="0 0 16 14"><path d="M1 5v4h2.500L7 12V2L3.500 5z" fill="none" stroke="#fff"/><path d="M9.500 5a3 3 0 0 1 0 4M11.500 3a6 6 0 0 1 0 8M13.500 1.500a8 8 0 0 1 0 11" fill="none" stroke="#fff"/></svg>
    <svg class="t-bat" viewBox="0 0 16 10"><rect x=".5" y=".5" width="13" height="9" rx="2" fill="none" stroke="#fff"/><rect x="2" y="2" width="2" height="6" fill="#fff"/><rect x="14.500" y="3" width="1.500" height="4" fill="#fff"/></svg>
    <div class="clock"><span>5:58 PM</span><span>4/19/2023</span></div>
    <b class="notif">1</b>
  </div>
</div>
</body>
</html>
```

FILE: styles.css
```css
* { box-sizing: border-box; }
html, body { margin: 0; padding: 0; }
body {
  width: 1366px; height: 768px; overflow: hidden;
  font-family: "Open Sans", "Noto Sans", "Liberation Sans", sans-serif;
  font-size: 11.5px; color: #333; background: #f3f3f3;
  display: flex; flex-direction: column;
}
.defs { position: absolute; }
h3 { margin: 0; font-weight: 400; font-size: 12px; color: #666; }
ul { list-style: none; margin: 0; padding: 0; }
svg { display: block; flex: none; }
.spacer { flex: 1; }

/* title bar */
.titlebar { height: 23px; background: #172736; display: flex; align-items: center; color: #fff; flex: none; }
.appicon { width: 16px; height: 16px; margin-left: 2px; }
.apptitle { margin-left: 5px; font-size: 11.170px; color: #f2f2f2; }
.winctl { margin-left: auto; display: flex; }
.winctl svg { width: 11px; height: 11px; margin-left: 34px; }
.winctl svg:last-child { margin-right: 20px; }
.winctl svg:first-child { margin-left: 0; }

/* menu */
.menubar { height: 20px; background: #fff; display: flex; align-items: center; padding-left: 8px; gap: 15.500px; font-size: 11.300px; color: #1a1a1a; flex: none; }

/* toolbar */
.toolbar { height: 41px; background: #f3f3f3; display: flex; align-items: center; padding-left: 14px; padding-right: 28px; flex: none; }
.ti { width: 20px; height: 20px; }
.tc { width: 7px; height: 4px; }
.sep { width: 1px; height: 34px; background: #d2d2d2; display: block; }
.m4 { margin-left: 4px; } .m6 { margin-left: 6px; } .m7 { margin-left: 7px; } .m8 { margin-left: 8px; }
.m9 { margin-left: 9px; } .m11 { margin-left: 11px; } .m12 { margin-left: 12px; } .m13 { margin-left: 13px; }
.m14 { margin-left: 14px; } .m16 { margin-left: 16px; } .m17 { margin-left: 17px; }
.tbtn { width: 30px; height: 30px; background: #e6e6e6; display: flex; align-items: center; justify-content: center; }
.tbtn svg { width: 17px; height: 15px; }
.combo { width: 103px; height: 22px; border: 1px solid #ccc; border-radius: 2px; display: flex; align-items: center; font-size: 13px; color: #555; padding-left: 7px; }
.combo span { flex: 1; padding-bottom: 2px; }
.combo b { width: 18px; height: 20px; border-left: 1px solid #ccc; display: flex; align-items: center; justify-content: center; }
.showme { display: flex; align-items: center; margin-left: 17px; font-size: 13px; color: #444; gap: 7px; }
.showme > span:last-child { padding-bottom: 2px; }
.smbars { width: 14px; display: flex; flex-direction: column; gap: 1px; }
.smbars i { height: 3px; display: block; }
.s1 { width: 11px; background: #8e7ea4; }
.s2 { width: 14px; background: #7fa4cb; }
.s3 { width: 5px; background: #f2a774; }
.s4 { width: 8px; background: #f07a80; }

/* main */
.main { height: 584px; display: flex; flex: none; }
.datapane { width: 170px; background: #fff; border-right: 1px solid #cfcfcf; flex: none; }
.dtabs { height: 26px; display: flex; }
.dtab { display: flex; align-items: center; font-size: 13px; padding-bottom: 1px; }
.dtab.on { width: 61px; font-weight: 700; padding-left: 18px; color: #333; background: #fff; font-size: 12.500px; }
.dtab.off { flex: 1; background: #f3f3f3; border-left: 1px solid #ccc; border-bottom: 1px solid #ccc; padding-left: 12px; color: #555; justify-content: space-between; padding-right: 7px; }
.dtab.off svg { width: 6px; height: 10px; }
.source { height: 30px; display: flex; align-items: center; padding-left: 20px; border-bottom: 1px solid #e2e2e2; gap: 5px; color: #666; }
.source svg { width: 17px; height: 16px; }
.searchrow { height: 40px; display: flex; align-items: center; padding: 0 0 0 8px; }
.search { width: 90px; height: 22px; border: 1px solid #ccc; border-radius: 2px; display: flex; align-items: center; padding: 0 6px; justify-content: space-between; color: #b5b5b5; font-size: 11.5px; }
.search svg { width: 11px; height: 11px; }
.funnel { width: 14px; height: 13px; margin-left: 4px; }
.vsep { width: 1px; height: 18px; background: #ddd; margin-left: 6px; display: block; }
.listicon { width: 12px; height: 10px; margin-left: 6px; }
.searchrow .tc { margin-left: 12px; }
.tablesh { height: 17px; line-height: 16px; padding-left: 18px; font-weight: 600; font-size: 13px; color: #222; }
.tables li { height: 27px; display: flex; align-items: center; font-weight: 700; color: #333; font-size: 11.700px; white-space: nowrap; }
.tables .ch { width: 7px; height: 10px; margin-left: 8px; }
.tables .tb { width: 10px; height: 10px; margin-left: 9px; }
.tables span { margin-left: 13px; }
.fields { margin-top: 4px; }
.fields li { height: 21px; display: flex; align-items: center; color: #555; font-size: 11.800px; position: relative; white-space: nowrap; }
.fields li > span { position: absolute; left: 47px; }
.fields .it { font-style: italic; font-size: 12.700px; }
.fields li.last { border-bottom: 0; }
.fields li.last::after { content: ""; position: absolute; left: 15px; right: 6px; bottom: -1px; height: 1px; background: #e0e0e0; }
.fields li.last + li { margin-top: 2px; }
.abc { font-style: normal; font-size: 9px; color: #4b86a0; margin-left: 21px; }
.abc.eq { margin-left: 18px; }
.mi { width: 15px; height: 11px; margin-left: 19px; }
.gi { width: 12px; height: 12px; margin-left: 22px; }
.hi { width: 10px; height: 10px; margin-left: 24px; }

.cards { width: 154px; margin-left: 6px; flex: none; display: flex; flex-direction: column; gap: 7px; }
.card { border: 1px solid #d4d4d4; background: #f9f9f9; padding: 6px; }
.pages { height: 61px; }
.filters { height: 123px; }
.filters h3 { margin-bottom: 9px; }
.frow { display: flex; align-items: center; height: 20px; margin-bottom: 3px; gap: 1px; margin-right: -6px; }
.frow svg { width: 18px; height: 16px; }
.pill { display: flex; align-items: center; height: 20px; border-radius: 10px; color: #eef6f8; font-size: 12px; white-space: nowrap; flex: none; }
.blue { background: #4e98b5; }
.green { background: #00b180; }
.frow .pill { width: 123px; padding-left: 10px; }
.marks { height: 240px; }
.markcombo { margin-top: 13px; width: 140px; height: 21px; border: 1px solid #d0d0d0; background: #f5f5f5; border-radius: 1px; display: flex; align-items: center; padding-left: 12px; color: #666; gap: 5px; }
.markcombo > svg { width: 12px; height: 10px; }
.markcombo span { flex: 1; padding-bottom: 1px; }
.markcombo b { width: 18px; height: 19px; border-left: 1px solid #d0d0d0; display: flex; align-items: center; justify-content: center; }
.markbtns { display: grid; grid-template-columns: 43px 42px 43px; column-gap: 6px; row-gap: 6px; margin-top: 6px; margin-bottom: 9px; }
.mb { height: 42px; border: 1px solid #d4d4d4; background: #f5f5f5; display: flex; flex-direction: column; align-items: center; justify-content: flex-end; padding-bottom: 2px; font-size: 11px; color: #444; gap: 1px; }
.mb.dim { color: #b0b0b0; }
.mbi { width: 14px; height: 14px; margin-bottom: 2px; }
.mrow { display: flex; align-items: center; height: 20px; margin-bottom: 3px; padding-left: 6px; gap: 6px; }
.mrow svg { width: 13px; height: 13px; }
.mrow .pill { width: 111px; padding-left: 11px; }

.work { width: 1024px; margin-left: 6px; flex: none; display: flex; flex-direction: column; gap: 6px; }
.shelf { height: 28px; border: 1px solid #d4d4d4; background: #f9f9f9; display: flex; align-items: center; flex: none; }
.shlabel { width: 126px; height: 100%; border-right: 1px solid #d4d4d4; display: flex; align-items: center; padding-left: 7px; padding-bottom: 1px; gap: 8px; color: #666; font-size: 11.5px; }
.shlabel svg { width: 10px; height: 11px; }
.shpills { display: flex; gap: 2px; margin-left: 1px; }
.cp { width: 148px; padding-left: 11px; font-size: 12px; gap: 6px; }
.cp svg { width: 11px; height: 11px; }
.vizrow { display: flex; gap: 6px; height: 510px; flex: none; }
.viz { width: 842px; height: 510px; border: 1px solid #dcdcdc; background: #fff; padding: 0 5px; position: relative; }
.viztitle { height: 27px; text-align: center; font-size: 14.200px; line-height: 34px; color: #222; }
.xtab { width: 830px; border-top: 1px solid #b8b8b8; }
.hrow { display: flex; height: 20px; border-bottom: 1px solid #b8b8b8; border-left: 1px solid #b8b8b8; border-right: 1px solid #b8b8b8; background: #efefef; font-size: 11.300px; color: #333; }
.hc { flex: 1; text-align: center; line-height: 19px; white-space: nowrap; overflow: hidden; }
.yr { padding-left: 366px; }
.q2 { flex: 0 0 793px; border-right: 1px solid #b8b8b8; }
.q3 { text-align: right; padding-right: 0; }
.mmay { flex: 0 0 403px; border-right: 1px solid #b8b8b8; }
.mjun { flex: 0 0 390px; border-right: 1px solid #b8b8b8; }
.mjul { text-align: right; }
.panes { height: 379px; display: flex; gap: 1px; border: 1px solid #b8b8b8; border-top: 0; overflow: hidden; background: #b8b8b8; }
.pane { height: 378px; overflow: visible; background: #fff; }
.pmay { width: 402px; }
.pjun { width: 389px; }
.pjul { width: 35px; overflow: hidden; }
.areas polygon { stroke-width: 2.400; stroke-linejoin: round; }
.a-b { fill: #76a9ce; stroke: #6394b9; }
.a-o { fill: #ffb06f; stroke: #6a97bc; }
.a-g { fill: #80c47e; stroke: #dc9a4c; }
.a-r { fill: #e57a7c; stroke: #6ca468; }
.lbl text { font-size: 33.500px; text-anchor: middle; fill: #111; }
.hscroll { height: 17px; background: #f0f0f0; width: 830px; position: relative; }
.hscroll span { position: absolute; left: 17px; top: 8px; width: 533px; height: 2px; background: #8a8a8a; }
.legend { width: 176px; height: 112px; border: 1px solid #dcdcdc; background: #fff; flex: none; }
.lgtitle { height: 29px; background: #f9f9f9; padding: 6px 0 0 6px; font-size: 12px; color: #666; }
.lgitem { height: 20px; display: flex; align-items: center; padding-left: 3px; gap: 5px; font-size: 11.5px; color: #333; }
.lgitem i { width: 14px; height: 14px; display: block; }
.sw-b { background: #76a9ce; } .sw-o { background: #ffb06f; } .sw-g { background: #80c47e; } .sw-r { background: #e57a7c; }

/* tabs */
.tabs { height: 32px; background: #e8e8e8; border-top: 1px solid #cfcfcf; border-bottom: 1px solid #cfcfcf; display: flex; flex: none; font-size: 11.800px; color: #666; }
.tab { border-right: 1px solid #cfcfcf; display: flex; align-items: center; white-space: nowrap; overflow: hidden; padding-left: 6px; height: 30px; }
.t0 { width: 130px; padding-left: 9px; gap: 6px; }
.t0 svg { width: 9px; height: 13px; }
.t1 { width: 145px; padding-left: 0; }
.t1 span { margin-left: -1px; }
.t2 { width: 155px; }
.t3 { width: 150px; }
.t4 { width: 150px; }
.t5 { width: 199.500px; }
.t6 { width: 163.500px; }
.t7 { width: 176px; background: #fff; font-weight: 600; font-size: 12px; color: #555; height: 30px; }
.tn { width: 32.500px; padding-left: 7px; }
.tn svg { width: 18px; height: 18px; }

/* status */
.status { height: 20px; background: #e8e8e8; display: flex; align-items: center; font-size: 11px; color: #333; flex: none; white-space: nowrap; padding-right: 0; }
.st1 { margin-left: 3px; width: 71px; }
.st2 { width: 120px; font-size: 10.700px; }
.st3 { font-size: 11.200px; }
.user { width: 127px; height: 100%; border-left: 1px solid #d4d4d4; display: flex; align-items: center; padding-left: 6px; gap: 10px; font-size: 11px; position: relative; }
.user svg:first-child { width: 11px; height: 16px; }
.user .tc { position: absolute; right: 7px; top: 8px; }
.user .dark { filter: brightness(.2); }
.cellb { width: 27px; height: 100%; border-left: 1px solid #d4d4d4; display: block; }
.cellb.wide { width: 47px; }
.nav { width: 72px; height: 100%; border-left: 1px solid #d4d4d4; display: flex; align-items: center; gap: 8px; padding-left: 8px; }
.nav svg { width: 8px; height: 8px; }
.views { width: 67px; height: 100%; border-left: 1px solid #d4d4d4; display: flex; align-items: center; gap: 9px; padding-left: 8px; }
.views svg { width: 11px; height: 14px; }

/* taskbar */
.taskbar { height: 48px; background: #18222e; display: flex; align-items: center; color: #fff; flex: none; position: relative; }
.weather { width: 300px; display: flex; align-items: center; padding-left: 22px; flex: none; }
.sun { width: 20px; height: 20px; border-radius: 50%; background: radial-gradient(circle at 40% 30%, #f6b52c, #ed7a14); display: block; }
.wtext { margin-left: 10px; display: flex; flex-direction: column; line-height: 16px; font-size: 11px; color: #f0f0f0; padding-top: 2px; }
.wtext .sub { color: #c9cdd2; }
.taskcenter { display: flex; align-items: center; }
.tk { width: 44px; height: 48px; display: flex; align-items: center; justify-content: center; position: relative; flex: none; }
.tk > svg { width: 24px; height: 24px; }
.tsearch { width: 100px; height: 32px; border-radius: 16px; background: #272f3b; margin: 0 3px 0 4px; display: flex; align-items: center; padding-left: 23px; gap: 5px; font-size: 11.5px; flex: none; }
.tsearch svg { width: 14px; height: 14px; }
.badge { position: absolute; top: 3px; right: 5px; width: 15px; height: 15px; border-radius: 50%; background: #2b4a6c; font-weight: 400; font-size: 11px; line-height: 15px; text-align: center; color: #e8e8e8; }
.avatar { position: absolute; top: 4px; right: 2px; width: 16px; height: 16px; }
.avatar svg { width: 16px; height: 16px; }
.dot { position: absolute; bottom: 5px; left: 19px; width: 6px; height: 3px; border-radius: 2px; background: #9ca3ab; display: block; }
.tk.cur { background: #262f3b; border-radius: 5px; height: 40px; width: 40px; margin: 0 2px; }
.cbar { position: absolute; bottom: 1px; left: 12px; width: 16px; height: 3px; border-radius: 2px; background: #4f86b8; display: block; }
.tray { display: flex; align-items: center; width: 227px; height: 48px; position: relative; padding-left: 1px; flex: none; }
.t-up { width: 12px; height: 8px; }
.t-cloud { width: 16px; height: 14px; margin-left: 10px; }
.t-wifi { width: 16px; height: 13px; margin-left: 10px; }
.t-vol { width: 16px; height: 14px; margin-left: 8px; }
.t-bat { width: 16px; height: 10px; margin-left: 8px; }
.clock { width: 62px; margin-left: 7px; display: flex; flex-direction: column; align-items: flex-end; font-size: 11px; line-height: 17px; color: #f0f0f0; }
.notif { width: 15px; height: 15px; border-radius: 50%; background: #2b4a6c; font-weight: 400; font-size: 10px; line-height: 15px; text-align: center; margin-left: 8px; color: #ddd; }
```
